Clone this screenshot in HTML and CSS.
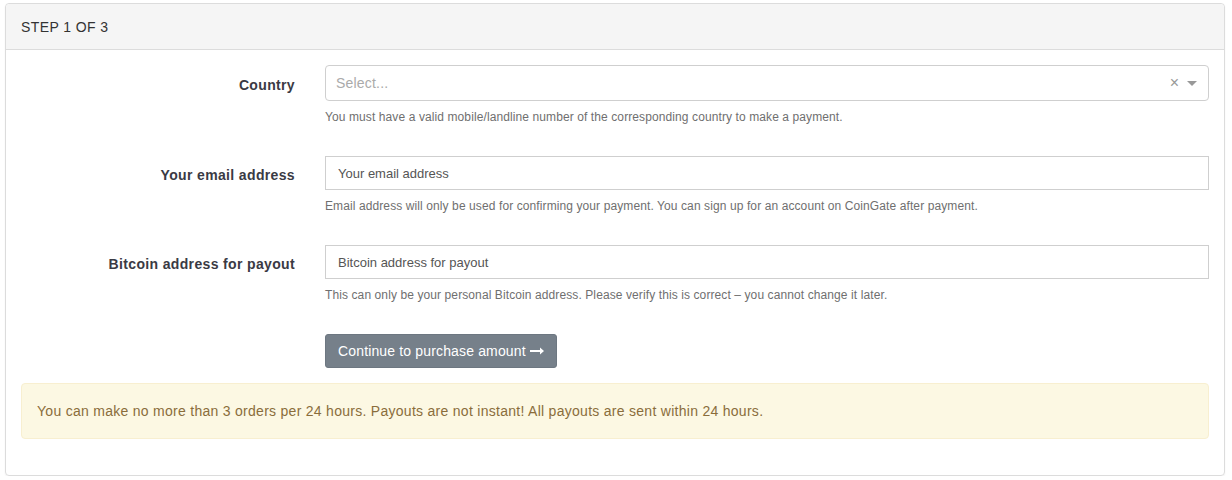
FILE: index.html
```
<!DOCTYPE html>
<html>
<head>
<meta charset="utf-8">
<link rel="stylesheet" href="styles.css">
</head>
<body>
<div class="panel">
  <div class="panel-heading">STEP 1 OF 3</div>
  <div class="panel-body">
    <div class="form-group">
      <label class="label">Country</label>
      <div class="field">
        <div class="select">
          <span class="select-placeholder">Select...</span>
          <span class="select-clear">×</span>
          <span class="select-arrow"></span>
        </div>
        <div class="help">You must have a valid mobile/landline number of the corresponding country to make a payment.</div>
      </div>
    </div>
    <div class="form-group">
      <label class="label">Your email address</label>
      <div class="field">
        <input class="input" type="text" placeholder="Your email address">
        <div class="help">Email address will only be used for confirming your payment. You can sign up for an account on CoinGate after payment.</div>
      </div>
    </div>
    <div class="form-group">
      <label class="label">Bitcoin address for payout</label>
      <div class="field">
        <input class="input" type="text" placeholder="Bitcoin address for payout">
        <div class="help">This can only be your personal Bitcoin address. Please verify this is correct – you cannot change it later.</div>
      </div>
    </div>
    <div class="form-group">
      <div class="label"></div>
      <div class="field">
        <button class="btn">Continue to purchase amount <svg class="arrow" width="14" height="8" viewBox="0 0 14 8"><path d="M0 3.1H10V0.4L14 4L10 7.6V4.9H0Z" fill="#fff"/></svg></button>
      </div>
    </div>
    <div class="alert">You can make no more than 3 orders per 24 hours. Payouts are not instant! All payouts are sent within 24 hours.</div>
  </div>
</div>
</body>
</html>
```
FILE: styles.css
```
* { box-sizing: border-box; }
body {
  margin: 0;
  padding: 3px 7px 0 5px;
  font-family: "Liberation Sans", Arial, sans-serif;
  font-size: 14px;
  color: #333;
  background: #fff;
}
.panel {
  border: 1px solid #dcdcdc;
  border-radius: 4px;
  box-shadow: 0 1px 2px rgba(0,0,0,0.06);
  height: 473px;
}
.panel-heading {
  background: #f5f5f5;
  border-bottom: 1px solid #dcdcdc;
  height: 46px;
  padding: 0 15px;
  line-height: 46px;
  font-size: 14px;
  letter-spacing: 0.4px;
  color: #333;
  border-radius: 4px 4px 0 0;
}
.panel-body {
  padding: 15px 15px;
}
.form-group {
  display: flex;
  margin-bottom: 30px;
}
.form-group:nth-child(4) { margin-bottom: 15px; }
.label {
  width: 274px;
  flex: none;
  text-align: right;
  font-weight: bold;
  color: #3a3a44;
  padding-top: 11px;
  font-size: 14px;
  letter-spacing: 0.35px;
}
.field {
  margin-left: 30px;
  flex: 1;
}
.select {
  height: 36px;
  border: 1px solid #cfcfcf;
  border-radius: 4px;
  display: flex;
  align-items: center;
  padding: 0 10px;
}
.select-placeholder {
  flex: 1;
  color: #aaa;
  font-size: 14px;
  letter-spacing: 0.2px;
}
.select-clear {
  color: #999;
  font-size: 16px;
  margin-right: 8px;
  line-height: 1;
}
.select-arrow {
  width: 0;
  height: 0;
  border-left: 5px solid transparent;
  border-right: 5px solid transparent;
  border-top: 5px solid #999;
  margin-right: 1px;
}
.form-group:first-child .label { padding-top: 12px; }
.input {
  display: block;
  width: 100%;
  height: 34px;
  border: 1px solid #cfcfcf;
  border-radius: 0;
  padding: 0 12px;
  font-family: "Liberation Sans", Arial, sans-serif;
  font-size: 13px;
  color: #555;
  outline: none;
}
.input::placeholder { color: #555; }
.help {
  margin-top: 8px;
  font-size: 12px;
  line-height: 17px;
  color: #6f6f6f;
  letter-spacing: 0.1px;
}
.btn {
  display: flex;
  align-items: center;
  gap: 4px;
  height: 34px;
  padding: 0 12px;
  background: #76808a;
  border: 1px solid #6d7781;
  border-radius: 3px;
  color: #fff;
  font-family: "Liberation Sans", Arial, sans-serif;
  font-size: 14px;
  font-weight: 500;
  letter-spacing: 0.15px;
  cursor: pointer;
}
.arrow { display: block; }
.alert {
  background: #fcf8e3;
  border: 1px solid #f8efd0;
  border-radius: 4px;
  color: #8a6d3b;
  padding: 17px 15px;
  line-height: 20px;
  font-size: 14px;
  letter-spacing: 0.28px;
}
```
